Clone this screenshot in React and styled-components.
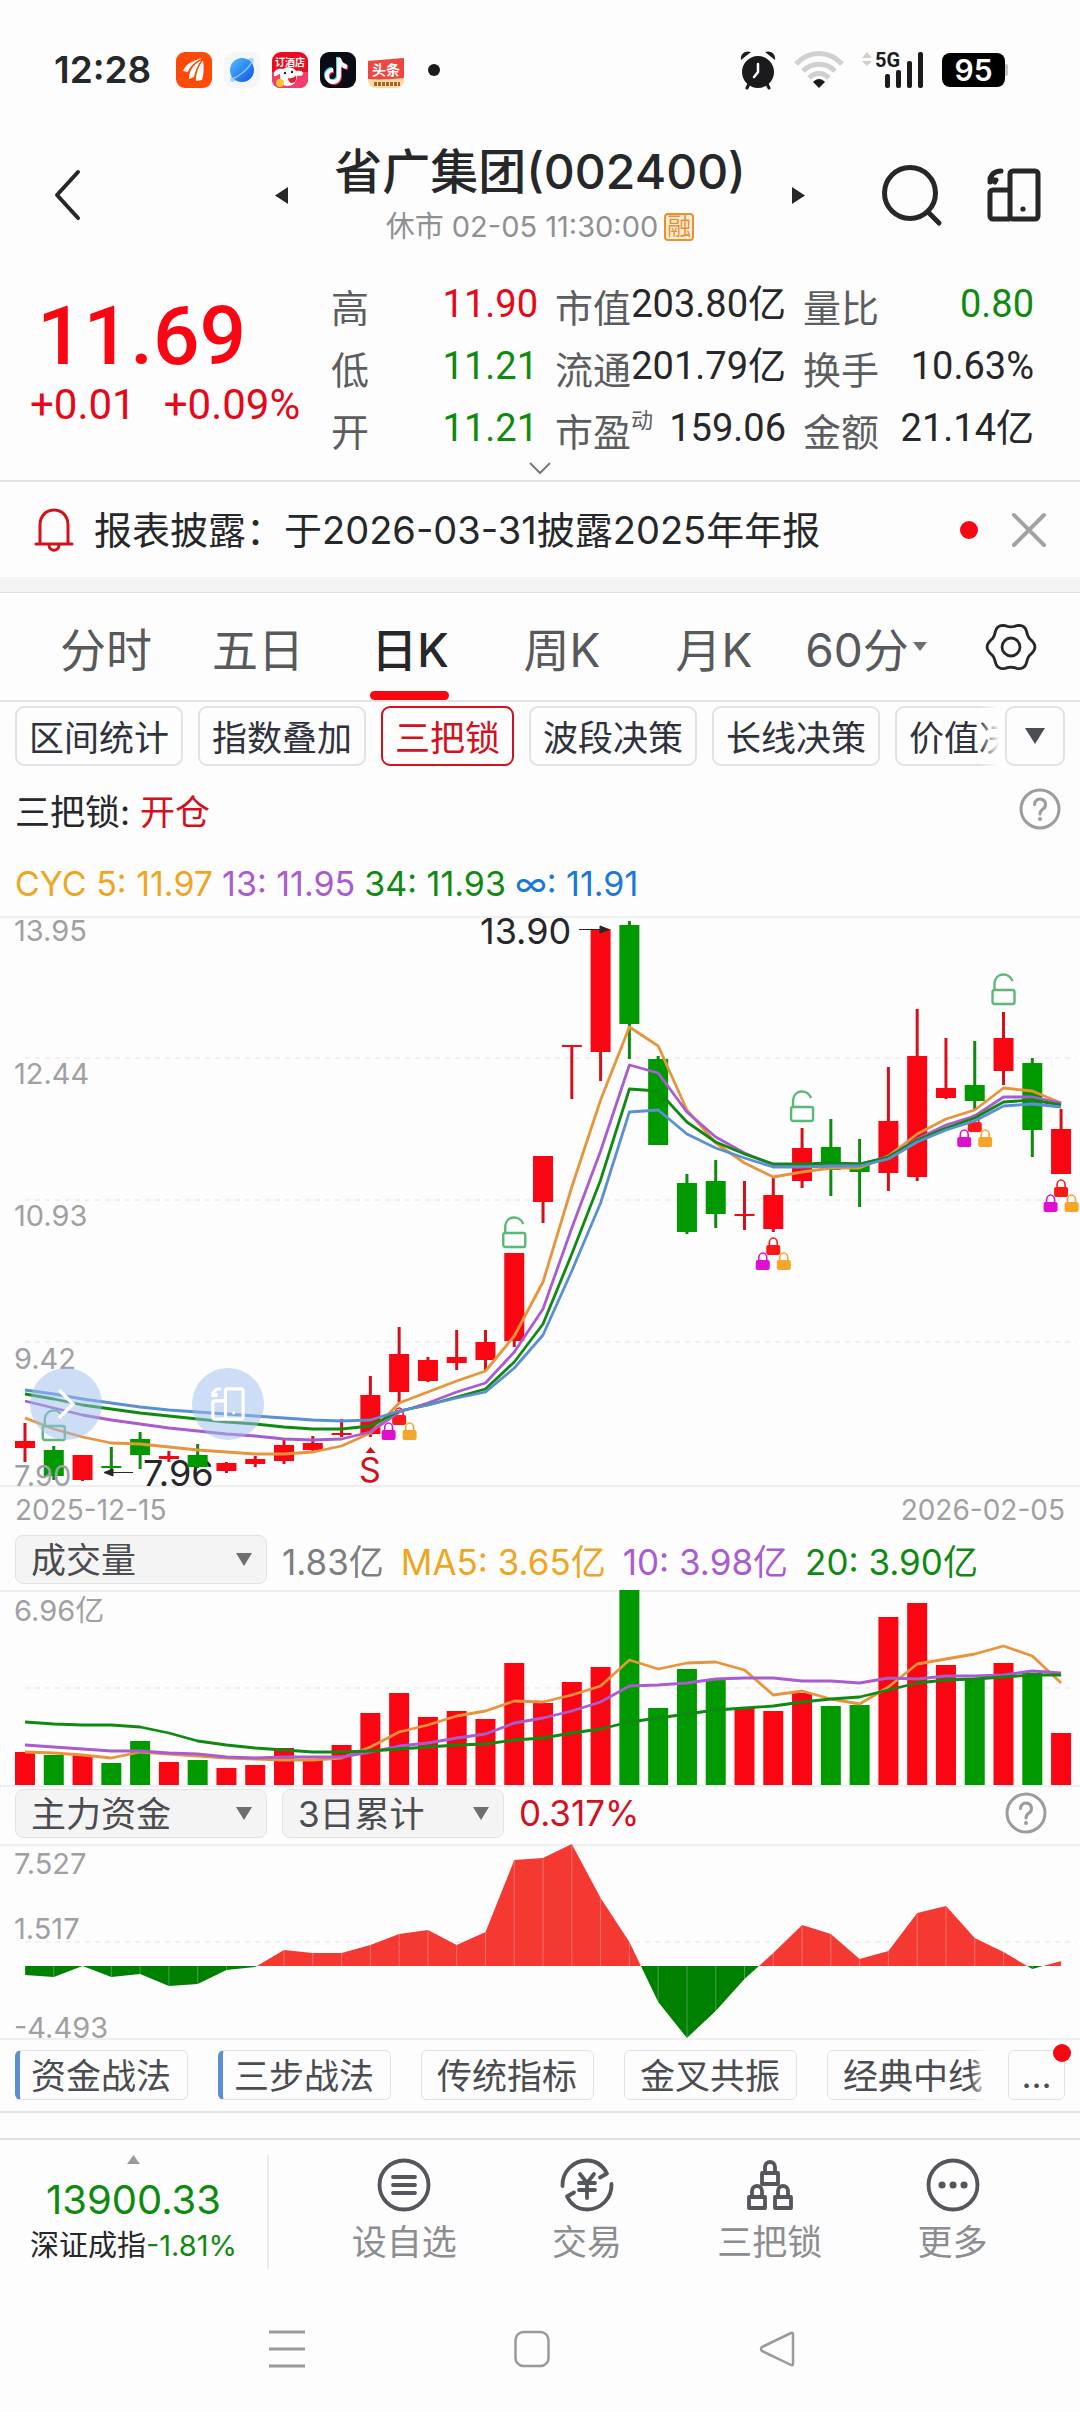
import React, { useState } from "react";
import styled, { createGlobalStyle } from "styled-components";

const RED = "#fa0512";
const DARK_RED = "#d3101c";
const GREEN = "#009a00";
const DARK_GREEN = "#0e8a10";
const ORANGE = "#e8943a";
const PURPLE = "#a95ccf";
const BLUE = "#5b8fd4";

// chart geometry
const FIRST_X = 25;
const STEP = 28.78;
const BAR = 20;
const xAt = (i) => FIRST_X + i * STEP;
const toPoints = (list) => list.map((y, i) => `${xAt(i).toFixed(1)},${y}`).join(" ");

// [high, bodyTop, bodyBottom, low, up]
const candles = [
  [507, 525, 532, 546, 1], [530, 534, 560, 564, 0], [539, 539, 564, 565, 1],
  [531, 550, 552, 554, 0], [516, 523, 539, 553, 0], [535, 540, 543, 546, 1],
  [528, 539, 551, 552, 0], [546, 547, 555, 557, 1], [540, 543, 548, 551, 1],
  [524, 529, 545, 548, 1], [520, 527, 534, 536, 1], [503, 517, 519, 521, 1],
  [460, 479, 518, 521, 1], [411, 438, 476, 486, 1], [441, 444, 465, 466, 1],
  [414, 441, 447, 454, 1], [414, 426, 444, 454, 1], [337, 337, 425, 431, 1],
  [240, 240, 286, 307, 1], [129, 129, 131, 183, 1], [13, 13, 136, 165, 1],
  [5, 9, 108, 143, 0], [140, 143, 229, 229, 0], [258, 267, 316, 318, 0],
  [244, 265, 298, 312, 0], [265, 298, 300, 314, 1], [262, 279, 313, 316, 1],
  [212, 232, 265, 272, 1], [203, 231, 254, 280, 0], [223, 249, 256, 291, 0],
  [151, 205, 257, 275, 1], [93, 140, 261, 265, 1], [122, 172, 182, 183, 1],
  [125, 169, 185, 193, 0], [96, 122, 155, 169, 1], [142, 147, 214, 241, 0],
  [193, 213, 258, 258, 1],
];

const cycLines = [
  { color: ORANGE, data: [502, 513, 521, 527, 528, 531, 534, 536, 538, 538, 536, 530, 517, 487, 476, 465, 455, 420, 366, 271, 184, 111, 130, 194, 227, 247, 261, 256, 252, 252, 240, 218, 203, 194, 172, 175, 187] },
  { color: PURPLE, data: [485, 492, 499, 504, 508, 512, 515, 518, 520, 523, 524, 523, 516, 496, 487, 476, 467, 436, 393, 312, 235, 149, 157, 196, 221, 237, 249, 249, 248, 248, 241, 223, 209, 200, 181, 181, 187] },
  { color: DARK_GREEN, data: [478, 483, 489, 493, 497, 500, 503, 506, 508, 511, 513, 513, 510, 495, 489, 481, 473, 446, 408, 338, 264, 173, 175, 206, 226, 238, 248, 248, 247, 248, 241, 224, 212, 202, 186, 184, 189] },
  { color: BLUE, data: [474, 478, 483, 487, 491, 494, 496, 498, 500, 502, 504, 505, 504, 495, 489, 482, 476, 452, 419, 355, 287, 196, 194, 218, 232, 242, 251, 251, 250, 250, 243, 226, 214, 205, 190, 188, 191] },
];

const volumes = [162, 165, 165, 173, 151, 172, 170, 178, 175, 158, 170, 155, 123, 103, 127, 121, 129, 73, 113, 92, 77, 0, 118, 79, 89, 118, 121, 103, 116, 115, 27, 13, 75, 89, 73, 83, 143];

const volumeLines = [
  { color: ORANGE, data: [162, 163, 165, 168, 162, 164, 166, 168, 169, 170, 170, 168, 157, 142, 135, 126, 121, 111, 112, 105, 96, 70, 79, 73, 72, 80, 105, 101, 109, 114, 97, 74, 69, 64, 56, 66, 93] },
  { color: PURPLE, data: [155, 157, 159, 161, 161, 163, 164, 167, 168, 167, 167, 167, 162, 156, 153, 148, 144, 133, 128, 121, 112, 96, 95, 93, 89, 88, 88, 91, 91, 93, 88, 89, 86, 86, 85, 81, 83] },
  { color: DARK_GREEN, data: [132, 134, 135, 135, 137, 143, 151, 155, 158, 160, 162, 162, 161, 159, 157, 155, 154, 150, 148, 143, 139, 132, 128, 124, 120, 118, 116, 112, 109, 107, 100, 93, 90, 89, 87, 85, 85] },
];

const funds = [131, 133, 122, 133, 130, 142, 140, 126, 123, 106, 109, 109, 101, 90, 86, 101, 88, 16, 14, 0, 54, 98, 158, 194, 167, 135, 109, 81, 90, 115, 107, 69, 62, 94, 108, 125, 117];
const FUND_ZERO = 122;

const GlobalStyle = createGlobalStyle`
  * { box-sizing: border-box; }
  body {
    margin: 0;
    background: #fdfdfd;
    color: #262729;
    font-family: Inter, "Noto Sans CJK SC", sans-serif;
  }
  button, select {
    margin: 0;
    padding: 0;
    border: 0;
    background: none;
    color: inherit;
    font: inherit;
  }
  svg {
    display: block;
    overflow: visible;
  }
`;

const Page = styled.div`
  min-width: 0;
`;

const StatusBar = styled.div`
  display: flex;
  justify-content: space-between;
  align-items: center;
  height: 140px;
  padding: 0 75px 0 54px;
`;

const StatusGroup = styled.div`
  display: flex;
  align-items: center;
  gap: ${(p) => p.$gap}px;
`;

const Clock = styled.span`
  margin-right: 13px;
  font-size: 37px;
  font-weight: 600;
  line-height: 40px;
`;

const Dot = styled.i`
  width: ${(p) => p.$size}px;
  height: ${(p) => p.$size}px;
  border-radius: 50%;
  background: ${(p) => p.$color};
`;

const MoreDot = styled(Dot)`
  margin-left: 12px;
`;

const Battery = styled.span`
  position: relative;
  width: 63px;
  height: 34px;
  border-radius: 8px;
  background: #000;
  color: #fff;
  font-size: 30px;
  font-weight: 600;
  line-height: 34px;
  text-align: center;

  &::after {
    content: "";
    position: absolute;
    top: 11px;
    right: -3px;
    width: 3px;
    height: 12px;
    border-radius: 0 2px 2px 0;
    background: #c4c4c4;
  }
`;

const Header = styled.header`
  display: grid;
  grid-template-columns: 1fr 530px 1fr;
  align-items: center;
  height: 110px;
  padding: 0 39px;
`;

const IconButton = styled.button`
  display: flex;
  align-items: center;
  justify-content: center;
`;

const BackButton = styled(IconButton)`
  justify-content: flex-start;
  padding: 0 14px;
`;

const StockSwitch = styled.div`
  display: flex;
  align-items: center;
  justify-content: space-between;
`;

const StockTitle = styled.div`
  text-align: center;

  h1 {
    margin: 0;
    font-size: 48px;
    font-weight: 500;
    line-height: 64px;
  }

  p {
    display: flex;
    align-items: center;
    justify-content: center;
    gap: 6px;
    margin: 0;
    color: #8f9092;
    font-size: 29px;
    line-height: 46px;
  }

  b {
    padding: 0 1px;
    border: 2px solid #ee8f2d;
    border-radius: 4px;
    background: #fdf0dc;
    color: #ee8f2d;
    font-size: 24px;
    font-weight: 400;
    line-height: 24px;
  }
`;

const HeaderTools = styled.div`
  display: flex;
  justify-content: flex-end;
  gap: 44px;
`;

const Quote = styled.section`
  display: grid;
  grid-template-columns: 306px 1fr;
  padding: 23px 46px 0 25px;
`;

const PriceBlock = styled.div`
  padding-top: 18px;
  color: ${RED};
  font-family: Roboto, "Noto Sans CJK SC", sans-serif;
`;

const Price = styled.div`
  padding-left: 12px;
  font-size: 82px;
  font-weight: 500;
  line-height: 90px;
`;

const Change = styled.div`
  display: flex;
  gap: 28px;
  padding-left: 5px;
  color: #e5081a;
  font-size: 42px;
  line-height: 48px;
`;

const Stats = styled.dl`
  display: grid;
  grid-template-columns: 207fr 231fr 231fr;
  column-gap: 17px;
  margin: 0;
`;

const Stat = styled.div`
  display: flex;
  align-items: center;
  justify-content: space-between;
  height: 62px;
  white-space: nowrap;

  dt {
    display: flex;
    padding-top: 8px;
    color: #5c5d60;
    font-size: 38px;
    line-height: 54px;
  }

  sup {
    font-size: 22px;
    line-height: 30px;
  }

  dd {
    margin: 0;
    color: ${(p) => p.$color || "#262729"};
    font-family: Roboto, "Noto Sans CJK SC", sans-serif;
    font-size: 38px;
    line-height: 62px;
  }
`;

const Expand = styled(IconButton)`
  width: 100%;
  height: 21px;
  padding-bottom: 4px;
`;

const Divider = styled.div`
  height: 2px;
  background: #e3e3e3;
`;

const Notice = styled.section`
  display: flex;
  align-items: center;
  height: 95px;
  padding: 0 34px;
  font-size: 38px;

  p {
    flex: 1;
    margin: 0 0 0 20px;
    line-height: 56px;
  }

  button { margin-left: 34px; }
`;

const Band = styled.div`
  height: 16px;
  border-bottom: 1px solid #e0e0e0;
  background: #f4f4f4;
`;

const Tabs = styled.nav`
  display: flex;
  height: 109px;
  padding-left: 30px;
  border-bottom: 2px solid #e4e4e4;
`;

const Tab = styled.button`
  position: relative;
  display: flex;
  flex: 1;
  align-items: center;
  justify-content: center;
  gap: 4px;
  color: ${(p) => (p.$active ? "#262729" : "#58595b")};
  font-size: 46px;
  font-weight: ${(p) => (p.$active ? 500 : 400)};
  white-space: nowrap;

  &::after {
    content: "";
    position: absolute;
    bottom: 0;
    left: 50%;
    width: 79px;
    height: 9px;
    margin-left: -40px;
    border-radius: 5px;
    background: ${(p) => (p.$active ? RED : "transparent")};
  }
`;

const GearButton = styled(IconButton)`
  width: 138px;
`;

const ChipBar = styled.div`
  display: flex;
  align-items: center;
  gap: ${(p) => p.$gap}px;
  padding: ${(p) => p.$pad};
`;

const ChipScroller = styled.div`
  position: relative;
  display: flex;
  flex: 1;
  gap: ${(p) => p.$gap}px;
  min-width: 0;
  overflow: hidden;

  &::after {
    content: "";
    position: absolute;
    top: 0;
    right: 0;
    bottom: 0;
    width: 20px;
    background: linear-gradient(to right, rgba(253, 253, 253, 0), #fdfdfd);
  }
`;

const Chip = styled.button`
  flex: none;
  height: 60px;
  padding: 4px 12px 0;
  border: 2px solid ${(p) => (p.$active ? DARK_RED : "#e2e2e4")};
  border-radius: 9px;
  color: ${(p) => (p.$active ? DARK_RED : "#2f323c")};
  font-size: 35px;
  line-height: 52px;
  white-space: nowrap;
`;

const MoreChip = styled(Chip)`
  display: flex;
  align-items: center;
  justify-content: center;
  width: 60px;
  padding: 0;
`;

const TacticChip = styled(Chip)`
  position: relative;
  height: 50px;
  padding: 2px 16px 0 ${(p) => (p.$marked ? 11 : 15)}px;
  border-width: 1px;
  border-left: ${(p) => (p.$marked ? `5px solid ${BLUE}` : "1px solid #e2e2e4")};
  border-radius: 6px;
  color: #4b4c50;
  line-height: 46px;
`;

const TacticMore = styled(TacticChip)`
  width: 57px;
  padding: 0;
`;

const Badge = styled(Dot)`
  position: absolute;
  top: -7px;
  right: -7px;
`;

const Signal = styled.div`
  display: flex;
  align-items: center;
  justify-content: space-between;
  height: 86px;
  padding: 0 19px 0 15px;
  font-size: 35px;

  em {
    color: ${DARK_RED};
    font-style: normal;
  }
`;

const Legend = styled.div`
  display: flex;
  gap: 9px;
  align-items: center;
  height: 64px;
  padding: 0 15px 2px;
  font-size: 34px;
  white-space: nowrap;
`;

const VolumeLegend = styled.div`
  display: flex;
  gap: 17px;
  font-size: 35px;
`;

const Value = styled.span`
  color: ${(p) => p.$color};
`;

const ChartBox = styled.div`
  position: relative;

  > svg {
    width: 100%;
    height: auto;
    font-family: Inter, "Noto Sans CJK SC", sans-serif;
  }
`;

const FloatButton = styled(IconButton)`
  position: absolute;
  bottom: 47px;
  left: ${(p) => p.$left}px;
  width: 72px;
  height: 72px;
  border-radius: 50%;
  background: rgba(155, 189, 238, 0.5);
`;

const Dates = styled.div`
  display: flex;
  justify-content: space-between;
  padding: 0 15px;
  color: #a0a0a2;
  font-size: 28px;
  line-height: 46px;
`;

const PanelHead = styled.div`
  display: flex;
  align-items: center;
  height: 57px;
  padding: 0 33px 5px 15px;
  font-size: 35px;
  white-space: nowrap;
`;

const SelectBox = styled.label`
  position: relative;
  width: ${(p) => p.$width}px;
  margin-right: 15px;

  select {
    width: 100%;
    height: 49px;
    padding: 2px 15px 0;
    border: 1px solid #e3e3e3;
    border-radius: 8px;
    background: #f4f4f4;
    color: #4b4c50;
    font-size: 35px;
    appearance: none;
  }

  svg {
    position: absolute;
    top: 18px;
    right: 15px;
    pointer-events: none;
  }
`;

const Spacer = styled.div`
  flex: 1;
`;

const BottomBar = styled.footer`
  display: flex;
  margin-top: 25px;
  padding: 15px 36px 20px 0;
  border-top: 2px solid #e0e0e0;
`;

const IndexLink = styled.a`
  display: flex;
  flex-direction: column;
  align-items: center;
  width: 269px;
  margin-right: 44px;
  border-right: 2px solid #ececec;
  color: #262729;
  font-size: 29px;
  line-height: 38px;
  text-decoration: none;

  strong {
    margin: 12px 0 3px;
    color: ${DARK_GREEN};
    font-size: 40px;
    font-weight: 400;
    line-height: 48px;
  }
`;

const NavItem = styled.button`
  display: flex;
  flex: 1;
  flex-direction: column;
  align-items: center;
  padding-top: 3px;
  color: #8c8d90;
  font-size: 35px;
  line-height: 56px;

  svg { margin-bottom: 2px; }
`;

const SystemBar = styled.div`
  display: flex;
  justify-content: center;
  gap: 209px;
  padding: 40px 16px 46px 0;
`;

function Triangle({ dir = "down", width = 16, height = 13, color = "#6d6e70" }) {
  const shapes = { down: "0,0 16,0 8,16", up: "0,16 16,16 8,0", left: "16,0 16,16 0,8", right: "0,0 0,16 16,8" };
  return (
    <svg width={width} height={height} viewBox="0 0 16 16" preserveAspectRatio="none" aria-hidden="true">
      <polygon points={shapes[dir]} fill={color} />
    </svg>
  );
}

function RotateIcon({ size, color, width }) {
  return (
    <svg width={size} height={size} viewBox="0 0 54 54" fill="none" stroke={color} strokeWidth={width} strokeLinejoin="round" aria-hidden="true">
      <rect x="23" y="3" width="28" height="48" rx="3" />
      <path d="M23 22H6a3 3 0 0 0-3 3v23a3 3 0 0 0 3 3h17" />
      <path d="M3 14C3 7 7 3 14 3M3 10l5 4M3 12h6" strokeLinecap="round" />
      <circle cx="36" cy="41" r="1.6" fill={color} strokeWidth="2" />
    </svg>
  );
}

function HelpIcon() {
  return (
    <svg width="42" height="42" viewBox="0 0 42 42" fill="none" stroke="#9c9c9e" strokeWidth="3" strokeLinecap="round" aria-hidden="true">
      <circle cx="21" cy="21" r="19" />
      <path d="M15.5 16.5a5.5 5.5 0 1 1 8.5 4.6c-2 1.300-3 2.300-3 4.900" />
      <circle cx="21" cy="31" r="1" fill="#9c9c9e" strokeWidth="2" />
    </svg>
  );
}

function GearIcon() {
  const pts = [];
  for (let a = 0; a < 360; a += 5) {
    const rad = (a * Math.PI) / 180;
    const r = 22 + 1.9 * Math.cos(6 * rad);
    pts.push(`${(26 + r * Math.cos(rad)).toFixed(1)},${(26 + r * Math.sin(rad)).toFixed(1)}`);
  }
  return (
    <svg width="52" height="52" viewBox="0 0 52 52" fill="none" stroke="#262729" strokeWidth="2.800" strokeLinejoin="round" aria-hidden="true">
      <polygon points={pts.join(" ")} />
      <circle cx="26" cy="26" r="9" />
    </svg>
  );
}

function AppIcons() {
  return (
    <>
      <svg width="36" height="36" viewBox="0 0 36 36" aria-hidden="true">
        <rect width="36" height="36" rx="9" fill="#ff4a05" />
        <path d="M7 19C10 12 17 8 27 6c-8 4-13 8-15 14z" fill="#fff" />
        <path d="M13 27c0-9 5-16 14-20-5 6-8 12-9 18z" fill="#fff" />
        <path d="M20 29c-1-8 2-15 7-21 1 7 1 14-1 20z" fill="#fff" />
        <path d="M12 22C15 14 20 10 27 6.500M19 27c1-9 4-15 8-20" stroke="#ff4a05" strokeWidth="1.300" fill="none" />
      </svg>
      <svg width="36" height="36" viewBox="0 0 36 36" aria-hidden="true">
        <defs>
          <linearGradient id="planet" x1="0" y1="0" x2="1" y2="1">
            <stop offset="0" stopColor="#52c1ff" />
            <stop offset="1" stopColor="#0b53e6" />
          </linearGradient>
        </defs>
        <rect width="36" height="36" rx="9" fill="#f5f6f8" />
        <ellipse cx="18" cy="18" rx="16" ry="5" transform="rotate(-45 18 18)" fill="#a8d6fb" />
        <circle cx="18" cy="18" r="12" fill="url(#planet)" />
        <path d="M8 27C16 24 24 17 28 10" stroke="#8ac8ff" strokeWidth="1.500" fill="none" />
      </svg>
      <svg width="36" height="36" viewBox="0 0 36 36" aria-hidden="true">
        <rect width="36" height="36" rx="9" fill="#ee0b20" />
        <path d="M0 20h36v8a8 8 0 0 1-8 8H8a8 8 0 0 1-8-8z" fill="#f23c6c" />
        <text x="18" y="14" fontSize="10" fontWeight="700" textAnchor="middle" fill="#fff">订酒店</text>
        <path d="M2 24c-1-6 4-8 9-7 4-3 11-2 13 2 5-1 8 1 7 3-1 3-5 1-6 2 0 7-5 10-10 10S8 29 8 22c-2 0-3 3-6 2z" fill="#fff" />
        <path d="M16 26c4 1 7-1 8-3 1 5-1 8-4 8-2 0-4-2-4-5z" fill="#e2202c" />
        <circle cx="13" cy="21" r="1.200" fill="#222" />
        <circle cx="20" cy="20" r="1.200" fill="#222" />
        <circle cx="8" cy="31" r="4" fill="#ffc629" />
      </svg>
      <svg width="36" height="36" viewBox="0 0 36 36" fill="none" strokeWidth="4" aria-hidden="true">
        <rect width="36" height="36" rx="9" fill="#0b0b16" />
        <path d="M18 5v18a6 6 0 1 1-6-6M18 6c1 5 4 7 8 8" stroke="#27e6e8" />
        <path d="M20 7v18a6 6 0 1 1-6-6M20 8c1 5 4 7 8 8" stroke="#f8285a" />
        <path d="M19 6v18a6 6 0 1 1-6-6M19 7c1 5 4 7 8 8" stroke="#fff" />
      </svg>
      <svg width="36" height="36" viewBox="0 0 36 36" aria-hidden="true">
        <path d="M0 9 36 6v22a8 8 0 0 1-8 8H8a8 8 0 0 1-8-8z" fill="#fbd9a0" />
        <path d="M0 9 36 6v20c-10 1-24 2-36 1z" fill="#f04642" />
        <text x="18" y="23" fontSize="14" fontWeight="700" textAnchor="middle" fill="#fff">头条</text>
        <path d="M6 32h26" stroke="#a8642a" strokeWidth="4" strokeDasharray="3 1" />
      </svg>
    </>
  );
}

function SignalIcons() {
  return (
    <>
      <svg width="36" height="38" viewBox="0 0 36 38" fill="#1b1b1d" aria-hidden="true">
        <circle cx="18" cy="21" r="16" />
        <path d="M1 9C0 3 5-1 11 1zM35 9c1-6-4-10-10-8z" />
        <path d="M9 33l-2 4M27 33l2 4" stroke="#1b1b1d" strokeWidth="3" strokeLinecap="round" />
        <path d="M18 13v8l-4 5" stroke="#fff" strokeWidth="2.500" fill="none" strokeLinecap="round" />
      </svg>
      <svg width="50" height="38" viewBox="0 0 50 38" fill="none" stroke="#d0d0d0" strokeWidth="5" aria-hidden="true">
        <path d="M2 13C15-1 35-1 48 13" />
        <path d="M9 20c9-9 23-9 32 0" />
        <path d="M15 27c6-6 14-6 20 0" />
        <path d="M19 31c4-4 8-4 12 0l-6 6z" fill="#1b1b1d" stroke="none" />
      </svg>
      <svg width="62" height="38" viewBox="0 0 62 38" fill="#1b1b1d" aria-hidden="true">
        <path d="M0 7l5-6 5 6zM0 10h10l-5 5z" fill="#cfcfcf" />
        <text x="13" y="16" fontSize="20" fontWeight="700" fontFamily="Roboto, sans-serif">5G</text>
        <rect x="23" y="23" width="5" height="14" rx="2" />
        <rect x="34" y="19" width="5" height="18" rx="2" />
        <rect x="45" y="10" width="5" height="27" rx="2" />
        <rect x="56" y="1" width="5" height="36" rx="2" />
      </svg>
    </>
  );
}

function OpenLock({ i, y }) {
  const x = xAt(i) - 12;
  return (
    <g transform={`translate(${x} ${y})`} fill="none" stroke="#5cb878" strokeWidth="2.400">
      <rect x="1" y="17" width="22" height="14" rx="2" />
      <path d="M3 17V10C4-1 18-1 21 8" />
    </g>
  );
}

function SmallLock({ x, y, color }) {
  return (
    <g transform={`translate(${x - 7} ${y})`}>
      <rect y="8" width="14" height="10" rx="2" fill={color} />
      <path d="M3 9V6a4 5 0 0 1 8 0v3" fill="none" stroke={color} strokeWidth="1.600" />
    </g>
  );
}

function TripleLock({ i, y }) {
  const x = xAt(i);
  return (
    <g>
      <SmallLock x={x} y={y} color="#fb1818" />
      <SmallLock x={x - 10.5} y={y + 15} color="#dd10d0" />
      <SmallLock x={x + 10.5} y={y + 15} color="#f5a52a" />
    </g>
  );
}

function Lines({ series }) {
  return series.map((s) => (
    <polyline key={s.color} points={toPoints(s.data)} fill="none" stroke={s.color} strokeWidth="2.800" strokeLinejoin="round" />
  ));
}

function CandleChart() {
  return (
    <svg viewBox="0 0 1080 571" role="img" aria-label="日K">
      <path d="M0 1H1080M0 570H1080" stroke="#efefef" strokeWidth="2" />
      <path d="M25 142H1076M25 284H1076M25 426H1076" stroke="#f0f0f0" strokeWidth="2" strokeDasharray="5 5" />
      <g fill="#262729" fontSize="36">
        <text x="480" y="28">13.90</text>
        <text x="143" y="570">7.96</text>
      </g>
      {candles.map(([high, top, bottom, low, up], i) => (
        <g key={i}>
          <rect x={xAt(i) - 1.5} y={high} width="3" height={low - high} fill={up ? DARK_RED : DARK_GREEN} />
          <rect x={xAt(i) - BAR / 2} y={top} width={BAR} height={bottom - top} fill={up ? RED : GREEN} />
        </g>
      ))}
      <g fill="#262729" stroke="#262729">
        <path d="M579 13.500H602" />
        <path d="M600 10v7l9-3.500z" />
        <path d="M133 556.500H110" />
        <path d="M113 553v7l-9-3.500z" />
      </g>
      <TripleLock i={13} y={491} />
      <TripleLock i={26} y={321} />
      <TripleLock i={33} y={198} />
      <TripleLock i={36} y={263} />
      <Lines series={cycLines} />
      <OpenLock i={1} y={493} />
      <OpenLock i={17} y={300} />
      <OpenLock i={27} y={174} />
      <OpenLock i={34} y={57} />
      <path d="M370.500 531l5 6h-10z" fill={DARK_RED} />
      <text x="370" y="566" fontSize="34" textAnchor="middle" fill={DARK_RED}>S</text>
      <g fill="#a0a0a2" fontSize="29">
        <text x="14" y="25">13.95</text>
        <text x="14" y="168">12.44</text>
        <text x="14" y="310">10.93</text>
        <text x="14" y="453">9.42</text>
        <text x="14" y="570">7.90</text>
      </g>
    </svg>
  );
}

function VolumeChart() {
  return (
    <svg viewBox="0 0 1080 197" role="img" aria-label="成交量">
      <path d="M0 1H1080M0 196H1080" stroke="#efefef" strokeWidth="2" />
      <path d="M25 98H1076" stroke="#f0f0f0" strokeWidth="2" strokeDasharray="5 5" />
      {volumes.map((top, i) => (
        <rect key={i} x={xAt(i) - BAR / 2} y={top} width={BAR} height={195 - top} fill={candles[i][4] ? RED : GREEN} />
      ))}
      <Lines series={volumeLines} />
      <text x="14" y="31" fontSize="29" fill="#a0a0a2">6.96亿</text>
    </svg>
  );
}

function FundChart() {
  const lastX = xAt(funds.length - 1);
  const area = `${FIRST_X},${FUND_ZERO} ${toPoints(funds)} ${lastX},${FUND_ZERO}`;
  return (
    <svg viewBox="0 0 1080 196" role="img" aria-label="主力资金">
      <defs>
        <clipPath id="inflow"><rect width="1080" height={FUND_ZERO} /></clipPath>
        <clipPath id="outflow"><rect y={FUND_ZERO} width="1080" height="80" /></clipPath>
        <clipPath id="flow"><polygon points={area} /></clipPath>
      </defs>
      <path d="M0 1H1080M0 195H1080" stroke="#efefef" strokeWidth="2" />
      <path d="M25 98H1076" stroke="#f0f0f0" strokeWidth="2" strokeDasharray="5 5" />
      <polygon points={area} fill="#f43932" clipPath="url(#inflow)" />
      <polygon points={area} fill="#008000" clipPath="url(#outflow)" />
      <g clipPath="url(#flow)" stroke="#fff" strokeOpacity="0.28">
        {funds.map((_, i) => <path key={i} d={`M${xAt(i)} 0V195`} />)}
      </g>
      <g fontSize="29" fill="#a0a0a2">
        <text x="14" y="30">7.527</text>
        <text x="14" y="95">1.517</text>
        <text x="14" y="194">-4.493</text>
      </g>
    </svg>
  );
}

function Picker({ label, options, width }) {
  return (
    <SelectBox $width={width}>
      <select aria-label={label}>
        {options.map((o) => <option key={o}>{o}</option>)}
      </select>
      <Triangle />
    </SelectBox>
  );
}

const navIcons = {
  设自选: (
    <>
      <circle cx="27" cy="27" r="24.500" />
      <path d="M16 19h22M16 27h22M16 35h22" />
    </>
  ),
  交易: (
    <>
      <path d="M2.500 28C2 14 13 2.500 27 2.500c9 0 16 5 20 13l-7 4M51.500 26C52 40 41 51.500 27 51.500c-9 0-16-5-20-13l7-4" />
      <path d="M20 16l7 9 7-9M27 25v15M19 25h16M19 32h16" />
    </>
  ),
  三把锁: (
    <>
      <path d="M19 15h16v11H19zM6 39h16v11H6zM32 39h16v11H32z" />
      <path d="M22 15V9a5 5 0 0 1 10 0v6M9 39v-6a5 5 0 0 1 10 0v6M35 39v-6a5 5 0 0 1 10 0v6" />
    </>
  ),
  更多: (
    <>
      <circle cx="27" cy="27" r="24.500" />
      <path d="M16 27h.1M27 27h.1M38 27h.1" strokeWidth="7" />
    </>
  ),
};

const stats = [
  ["高", "11.90", "#e5081a"], ["市值", "203.80亿"], ["量比", "0.80", DARK_GREEN],
  ["低", "11.21", DARK_GREEN], ["流通", "201.79亿"], ["换手", "10.63%"],
  ["开", "11.21", DARK_GREEN], ["市盈", "159.06"], ["金额", "21.14亿"],
];

const periods = ["分时", "五日", "日K", "周K", "月K", "60分"];
const indicators = ["区间统计", "指数叠加", "三把锁", "波段决策", "长线决策", "价值决策"];
const tactics = ["资金战法", "三步战法", "传统指标", "金叉共振", "经典中线"];

const App = () => {
  const [period, setPeriod] = useState("日K");
  const [indicator, setIndicator] = useState("三把锁");

  return (
    <Page lang="zh-CN">
      <GlobalStyle />
      <StatusBar>
        <StatusGroup $gap={12}>
          <Clock>12:28</Clock>
          <AppIcons />
          <MoreDot $size={12} $color="#1b1b1d" />
        </StatusGroup>
        <StatusGroup $gap={18}>
          <SignalIcons />
          <Battery>95</Battery>
        </StatusGroup>
      </StatusBar>

      <Header>
        <BackButton aria-label="返回">
          <svg width="28" height="52" viewBox="0 0 28 52" fill="none" stroke="#262729" strokeWidth="4" strokeLinecap="round" strokeLinejoin="round">
            <path d="M25 3 4 26l21 23" />
          </svg>
        </BackButton>
        <StockSwitch>
          <IconButton aria-label="上一只"><Triangle dir="left" width={13} height={17} color="#262729" /></IconButton>
          <StockTitle>
            <h1>省广集团(002400)</h1>
            <p>休市 02-05 11:30:00<b>融</b></p>
          </StockTitle>
          <IconButton aria-label="下一只"><Triangle dir="right" width={13} height={17} color="#262729" /></IconButton>
        </StockSwitch>
        <HeaderTools>
          <IconButton aria-label="搜索">
            <svg width="62" height="62" viewBox="0 0 62 62" fill="none" stroke="#262729" strokeWidth="5" strokeLinecap="round">
              <circle cx="29" cy="29" r="25.500" />
              <path d="M47 48l11 11" />
            </svg>
          </IconButton>
          <IconButton aria-label="横屏"><RotateIcon size={54} color="#262729" width={5} /></IconButton>
        </HeaderTools>
      </Header>

      <Quote>
        <PriceBlock>
          <Price>11.69</Price>
          <Change><span>+0.01</span><span>+0.09%</span></Change>
        </PriceBlock>
        <Stats>
          {stats.map(([name, value, color]) => (
            <Stat key={name} $color={color}>
              <dt>{name}{name === "市盈" && <sup>动</sup>}</dt>
              <dd>{value}</dd>
            </Stat>
          ))}
        </Stats>
      </Quote>
      <Expand aria-label="展开">
        <svg width="22" height="12" viewBox="0 0 22 12" fill="none" stroke="#77787a" strokeWidth="2">
          <path d="M1 1l10 10L21 1" />
        </svg>
      </Expand>
      <Divider />

      <Notice>
        <svg width="40" height="44" viewBox="0 0 40 44" fill="none" stroke={DARK_RED} strokeWidth="3" strokeLinecap="round" aria-hidden="true">
          <path d="M2 36h36M6 36V17C6 8 12 2 20 2s14 6 14 15v19M15 37c0 7 10 7 10 0" />
        </svg>
        <p>报表披露：于2026-03-31披露2025年年报</p>
        <Dot $size={18} $color={RED} />
        <button aria-label="关闭">
          <svg width="34" height="34" viewBox="0 0 34 34" stroke="#a2a2a4" strokeWidth="4" strokeLinecap="round">
            <path d="M2 2l30 30M32 2 2 32" />
          </svg>
        </button>
      </Notice>
      <Band />

      <Tabs>
        {periods.map((name) => (
          <Tab key={name} $active={name === period} onClick={() => setPeriod(name)}>
            {name}
            {name === "60分" && <Triangle width={14} height={9} />}
          </Tab>
        ))}
        <GearButton aria-label="设置"><GearIcon /></GearButton>
      </Tabs>

      <ChipBar $gap={6} $pad="4px 15px 0">
        <ChipScroller $gap={15}>
          {indicators.map((name) => (
            <Chip key={name} $active={name === indicator} onClick={() => setIndicator(name)}>{name}</Chip>
          ))}
        </ChipScroller>
        <MoreChip aria-label="更多指标"><Triangle width={20} height={16} color="#4c4e55" /></MoreChip>
      </ChipBar>

      <Signal>
        <span>三把锁: <em>开仓</em></span>
        <IconButton aria-label="说明"><HelpIcon /></IconButton>
      </Signal>
      <Legend>
        <Value $color="#efa61f">CYC 5: 11.97</Value>
        <Value $color={PURPLE}>13: 11.95</Value>
        <Value $color={DARK_GREEN}>34: 11.93</Value>
        <Value $color="#1a78d6">∞: 11.91</Value>
      </Legend>

      <ChartBox>
        <CandleChart />
        <FloatButton $left={30} aria-label="下一页">
          <svg width="20" height="30" viewBox="0 0 20 30" fill="none" stroke="#fff" strokeWidth="3.500">
            <path d="M3 1l14 14L3 29" />
          </svg>
        </FloatButton>
        <FloatButton $left={192} aria-label="横屏"><RotateIcon size={34} color="#fff" width={5} /></FloatButton>
      </ChartBox>
      <Dates><span>2025-12-15</span><span>2026-02-05</span></Dates>

      <PanelHead>
        <Picker label="副图指标" width={252} options={["成交量", "成交额"]} />
        <VolumeLegend>
          <Value $color="#7d7e80">1.83亿</Value>
          <Value $color="#efa61f">MA5: 3.65亿</Value>
          <Value $color={PURPLE}>10: 3.98亿</Value>
          <Value $color={DARK_GREEN}>20: 3.90亿</Value>
        </VolumeLegend>
      </PanelHead>
      <ChartBox><VolumeChart /></ChartBox>

      <PanelHead>
        <Picker label="资金指标" width={252} options={["主力资金", "散户资金"]} />
        <Picker label="累计周期" width={222} options={["3日累计", "5日累计"]} />
        <Value $color={DARK_RED}>0.317%</Value>
        <Spacer />
        <IconButton aria-label="说明"><HelpIcon /></IconButton>
      </PanelHead>
      <ChartBox><FundChart /></ChartBox>

      <ChipBar $gap={18} $pad="10px 15px 11px">
        <ChipScroller $gap={30}>
          {tactics.map((name, i) => (
            <TacticChip key={name} $marked={i < 2}>{name}</TacticChip>
          ))}
        </ChipScroller>
        <TacticMore aria-label="更多战法">
          ...
          <Badge $size={18} $color={RED} />
        </TacticMore>
      </ChipBar>
      <Divider />

      <BottomBar>
        <IndexLink href="#index">
          <Triangle dir="up" width={13} height={9} color="#9c9c9e" />
          <strong>13900.33</strong>
          <span>深证成指<Value $color={DARK_GREEN}>-1.81%</Value></span>
        </IndexLink>
        {Object.entries(navIcons).map(([name, icon]) => (
          <NavItem key={name}>
            <svg width="54" height="54" viewBox="0 0 54 54" fill="none" stroke="#55565c" strokeWidth="3.800" strokeLinecap="round" strokeLinejoin="round" aria-hidden="true">
              {icon}
            </svg>
            {name}
          </NavItem>
        ))}
      </BottomBar>

      <SystemBar>
        <IconButton aria-label="最近任务">
          <svg width="36" height="38" viewBox="0 0 36 38" stroke="#9a9a9c" strokeWidth="3">
            <path d="M0 2h36M0 19h36M0 36h36" />
          </svg>
        </IconButton>
        <IconButton aria-label="主屏幕">
          <svg width="36" height="38" viewBox="0 0 36 38" fill="none" stroke="#9a9a9c" strokeWidth="2.500">
            <rect x="1.500" y="2" width="33" height="34" rx="8" />
          </svg>
        </IconButton>
        <IconButton aria-label="返回上一页">
          <svg width="36" height="38" viewBox="0 0 36 38" fill="none" stroke="#9a9a9c" strokeWidth="2.500" strokeLinejoin="round">
            <path d="M34 4v30q0 2-2 1L3 21q-2-2 0-4L32 3q2-1 2 1z" />
          </svg>
        </IconButton>
      </SystemBar>
    </Page>
  );
};

export default App;
